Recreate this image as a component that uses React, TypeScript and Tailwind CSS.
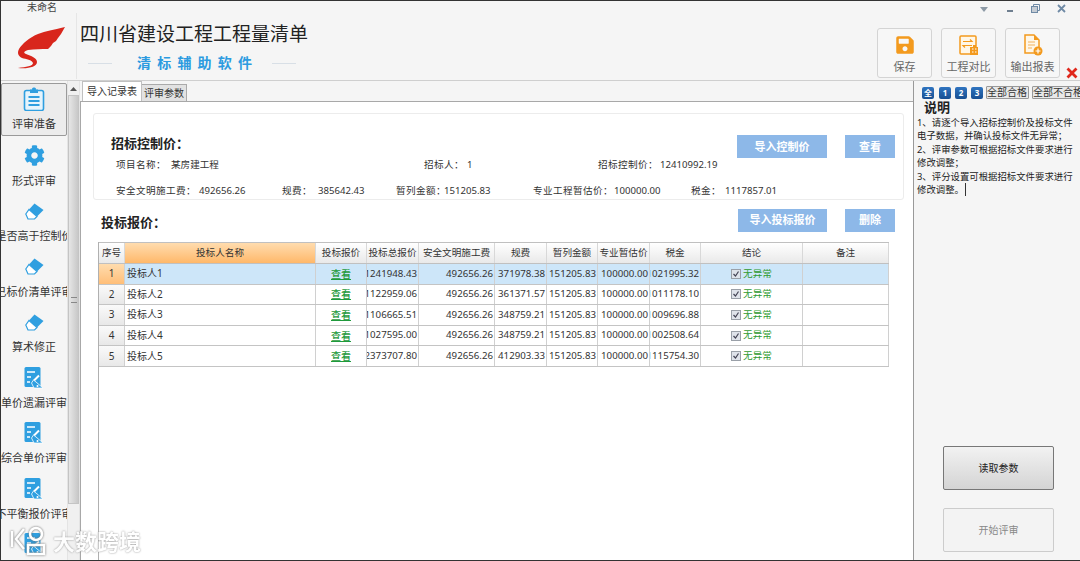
import { FaCog, FaSave } from 'react-icons/fa';

const bidders = [
  { name: '投标人1', total: '1241948.43', fee: '371978.38', tax: '1021995.32' },
  { name: '投标人2', total: '1122959.06', fee: '361371.57', tax: '1011178.10' },
  { name: '投标人3', total: '1106665.51', fee: '348759.21', tax: '1009696.88' },
  { name: '投标人4', total: '1027595.00', fee: '348759.21', tax: '1002508.64' },
  { name: '投标人5', total: '2373707.80', fee: '412903.33', tax: '1115754.30' },
];

const rowGrid =
  'grid w-[790px] grid-cols-[26px_191px_51px_52px_76px_52px_51px_52px_51px_102px_86px]';

function ClipboardIcon() {
  return (
    <svg width="22" height="24" viewBox="0 0 22 24" fill="none">
      <rect x="9" y="0.5" width="4" height="3" rx="1.5" fill="#2f9fe0" />
      <rect x="1.5" y="3.5" width="19" height="20" rx="2" stroke="#2f9fe0" strokeWidth="1.6" fill="#e6f4fc" />
      <path d="M5.5 10h11M5.5 14h11M5.5 18h11" stroke="#2f9fe0" strokeWidth="2" />
      <path d="M7 2.5h8v3.5H7z" fill="#2f9fe0" />
    </svg>
  );
}

function EraserIcon() {
  return (
    <svg width="19" height="17" viewBox="0 0 19 17" fill="none">
      <path d="M9.5 0.5 18.5 7 12 13.5 4 6.5z" fill="#2f9fe0" />
      <path d="M4 6.5 12 13.5 9.5 16H3L0.8 11z" fill="#fff" stroke="#2f9fe0" strokeWidth="1.2" />
    </svg>
  );
}

function ReviewIcon() {
  return (
    <svg width="20" height="22" viewBox="0 0 20 22" fill="none">
      <rect x="0.5" y="0" width="16" height="20" rx="1.5" fill="#2f9fe0" />
      <path d="M3 5h8M3 10h4M3 15h3" stroke="#fff" strokeWidth="1.5" />
      <path d="M15 8.5 10 13.5" stroke="#fff" strokeWidth="2" />
      <path d="M9.5 13 12 15 15.5 18 19 21H10L7.5 16z" fill="#2f9fe0" stroke="#fff" strokeWidth="0.8" />
      <circle cx="13.5" cy="19" r="1" fill="#fff" />
    </svg>
  );
}

function CompareIcon() {
  return (
    <svg width="20" height="21" viewBox="0 0 20 21" fill="none">
      <rect x="1" y="1" width="16" height="18" rx="1" fill="#fff7e8" stroke="#f39a1e" strokeWidth="1.5" />
      <path d="M4 6.5h9l-2-2M13 10.5H4l2 2" stroke="#f39a1e" strokeWidth="1.2" />
      <path d="M11 12h3v-2h3v2h2v8h-8z" fill="#f39a1e" />
      <path d="M13 14h1.5M16 14h1.5M13 17h1.5M16 17h1.5" stroke="#fff" />
    </svg>
  );
}

function ExportIcon() {
  return (
    <svg width="20" height="22" viewBox="0 0 20 22" fill="none">
      <path d="M2 1h9l5 5v13H2z" fill="#fff7e8" stroke="#f39a1e" strokeWidth="1.5" />
      <path d="M11 1v5h5z" fill="#f39a1e" />
      <path d="M5 8h7M5 11h7M5 14h4" stroke="#f3b45e" strokeWidth="1.2" />
      <circle cx="15" cy="17" r="4.5" fill="#f39a1e" />
      <path d="M12.5 17h5M15 14.5v5" stroke="#fff" strokeWidth="1.2" />
    </svg>
  );
}

function SideItem({ icon, label, active }: { icon: React.ReactNode; label: string; active?: boolean }) {
  return (
    <div
      className={`flex shrink-0 flex-col items-center overflow-hidden ${
        active
          ? 'mb-[2.5px] h-[53px] rounded-[2px] border border-[#9a9a9a] bg-[#ececec] pt-[2px]'
          : 'h-[55.5px] pt-[4px]'
      }`}
    >
      <div className="flex h-[26px] items-center justify-center">{icon}</div>
      <div className="mt-[4px] flex w-full justify-center whitespace-nowrap text-[11px] leading-[15px] text-[#333]">
        {label}
      </div>
    </div>
  );
}

function ToolButton({ icon, label }: { icon: React.ReactNode; label: string }) {
  return (
    <div className="flex h-[50px] w-[55px] flex-col items-center rounded-[3px] border border-[#d4d4d4] bg-[#f7f7f7] pt-[4px]">
      <div className="flex h-[24px] items-center">{icon}</div>
      <div className="mt-[3px] whitespace-nowrap text-[11px] leading-[14px] text-[#666]">{label}</div>
    </div>
  );
}

function BlueButton({ label, width }: { label: string; width: string }) {
  return (
    <div className={`flex h-[23px] items-center justify-center bg-[#8db8e8] text-[11px] font-bold text-white ${width}`}>
      {label}
    </div>
  );
}

function Badge({ label }: { label: string }) {
  return (
    <div className="flex h-[12px] w-[12px] shrink-0 items-center justify-center rounded-[2px] bg-gradient-to-b from-[#2f74c0] to-[#184f92] text-[8px] font-bold text-white">
      {label}
    </div>
  );
}

function GrayChip({ label, width }: { label: string; width: string }) {
  return (
    <div className={`flex h-[13px] shrink-0 items-center overflow-hidden whitespace-nowrap rounded-[1px] border border-[#999] bg-[#e8e8e8] text-[10px] text-[#333] ${width}`}>
      {label}
    </div>
  );
}

function Field({ label, value, box, labelBox }: { label: string; value: string; box: string; labelBox: string }) {
  return (
    <div className={`flex ${box}`}>
      <span className={`tracking-[0.4px] ${labelBox}`}>{label}</span>
      <span>{value}</span>
    </div>
  );
}

function HeadCell({ label, orange }: { label: string; orange?: boolean }) {
  return (
    <div
      className={`flex items-center justify-center overflow-hidden whitespace-nowrap border-r border-[#d8d8d8] text-[9.6px] text-[#333] ${
        orange ? 'bg-gradient-to-b from-[#ffdcae] to-[#ffb869]' : 'bg-gradient-to-b from-white to-[#e9e9e9]'
      }`}
    >
      {label}
    </div>
  );
}

function NumCell({ value }: { value: string }) {
  return (
    <div className="flex items-center justify-end overflow-hidden whitespace-nowrap border-r border-[#d0d0d0] pr-[1px] text-[9.7px] text-[#333]">
      {value}
    </div>
  );
}

export default function App() {
  return (
    <div className="flex h-[561px] w-[1080px] flex-col overflow-hidden border-y border-l border-[#333] bg-[#f5f5f5] font-['Noto_Sans','Noto_Sans_CJK_SC',sans-serif] text-[#333]">
      {/* header */}
      <div className="flex h-[80px] shrink-0 border-b border-[#cfcfcf]">
        <div className="flex-1">
          <div className="pl-[26px] text-[10px] leading-[12px] text-[#444]">未命名</div>
          <div className="flex">
            <div className="h-[66px] w-[76px] shrink-0 border-r border-[#e6e6e6] pl-[7px] pt-[9px]">
              <svg width="64" height="50" viewBox="0 0 64 50">
                <path
                  d="M57 5C45 8 38 9 30 12 22 15 14 22 11 27 9 31 10 34 14 36 18 37 24 38 25 41 25 44 18 45 10 46 20 47 29 45 29 40 29 36 23 34 18 32 15 31 16 29 20 28 27 27 33 27 40 27L43 24 45 21 48 19 50 16 53 12Z"
                  fill="#d8261c"
                />
              </svg>
            </div>
            <div className="pl-[3px] pt-[8px]">
              <div className="whitespace-nowrap text-[19px] leading-[26px] text-[#222]">四川省建设工程工程量清单</div>
              <div className="mt-[6px] flex items-center">
                <div className="ml-[8px] h-px w-[24px] bg-[#d8dfe6]" />
                <div className="ml-[25px] whitespace-nowrap text-[14px] font-bold leading-[20px] tracking-[6.2px] text-[#2c9be0]">
                  清标辅助软件
                </div>
                <div className="ml-[14px] h-px w-[24px] bg-[#d8dfe6]" />
              </div>
            </div>
          </div>
        </div>
        <div className="flex w-[203px] shrink-0 flex-col">
          <div className="flex h-[27px] items-start pt-[1px] text-[#6f8aa5]">
            <svg className="ml-[102px] mt-[5px]" width="10" height="6" viewBox="0 0 10 6">
              <path d="M1 0h8L5 5z" fill="#8d9aa6" />
            </svg>
            <div className="ml-[18px] mt-[8px] h-[2px] w-[6px] bg-[#6f7f90]" />
            <svg className="ml-[18px] mt-[2px]" width="9" height="9" viewBox="0 0 9 9" fill="none">
              <rect x="0.5" y="2.5" width="6" height="6" fill="#c5ccd4" stroke="#6f8aa5" />
              <path d="M2.5 2V.5h6v6H7" stroke="#6f8aa5" />
            </svg>
            <svg className="ml-[17px] mt-[2px]" width="9" height="9" viewBox="0 0 9 9">
              <path d="M1 1l7 7M8 1L1 8" stroke="#6f8aa5" strokeWidth="1.8" />
            </svg>
          </div>
          <div className="flex items-start">
            <ToolButton icon={<FaSave size={20} color="#f39a1e" />} label="保存" />
            <div className="ml-[9px]">
              <ToolButton icon={<CompareIcon />} label="工程对比" />
            </div>
            <div className="ml-[9px]">
              <ToolButton icon={<ExportIcon />} label="输出报表" />
            </div>
            <svg className="ml-[6px] mt-[39px]" width="12" height="12" viewBox="0 0 12 12">
              <path d="M1.5 1.5l9 9M10.5 1.5l-9 9" stroke="#e0281c" strokeWidth="2.8" />
            </svg>
          </div>
        </div>
      </div>

      <div className="flex min-h-0 flex-1">
        {/* sidebar */}
        <div className="flex w-[66px] shrink-0 flex-col overflow-hidden pt-[2px]">
          <SideItem active icon={<ClipboardIcon />} label="评审准备" />
          <SideItem icon={<FaCog size={21} color="#2f9fe0" />} label="形式评审" />
          <SideItem icon={<EraserIcon />} label="是否高于控制价" />
          <SideItem icon={<EraserIcon />} label="已标价清单评审" />
          <SideItem icon={<EraserIcon />} label="算术修正" />
          <SideItem icon={<ReviewIcon />} label="单价遗漏评审" />
          <SideItem icon={<ReviewIcon />} label="综合单价评审" />
          <SideItem icon={<ReviewIcon />} label="不平衡报价评审" />
          <SideItem icon={<ReviewIcon />} label="清单子目评审" />
        </div>

        {/* scrollbar */}
        <div className="flex w-[13px] shrink-0 flex-col items-center border-x border-[#e4e4e4] bg-[#f0f0f0]">
          <svg className="mt-[6px]" width="7" height="4" viewBox="0 0 7 4">
            <path d="M3.5 0 7 4H0z" fill="#555" />
          </svg>
          <div className="mt-[4px] flex h-[409px] w-full flex-col items-center justify-center border border-[#c4c4c4] bg-gradient-to-r from-[#e6e6e6] to-[#c8c8c8]">
            <div className="h-[6px] w-[6px] border-y border-[#888]" />
          </div>
        </div>

        {/* main */}
        <div className="flex min-w-0 flex-1 flex-col">
          <div className="flex h-[20px] shrink-0 items-end pl-[2px]">
            <div className="flex h-[20px] w-[60px] items-center justify-center border border-b-0 border-[#c0c0c0] bg-white text-[10px]">
              导入记录表
            </div>
            <div className="flex h-[17px] w-[45px] items-center justify-center border-r border-t border-[#aaa] bg-[#e2e2e2] text-[10px]">
              评审参数
            </div>
          </div>
          <div className="min-h-0 flex-1 border-l border-t border-[#a8a8a8] bg-white pl-[12px] pr-[9px] pt-[11px]">
            <div className="h-[87px] rounded-[3px] border border-[#ececec] pl-[17px] pt-[21px] text-[9.6px] leading-[14px]">
              <div className="flex h-[23px] items-start">
                <div className="-mt-px flex-1 text-[13px] font-bold leading-[18px] text-[#222]">招标控制价：</div>
                <BlueButton label="导入控制价" width="w-[90px]" />
                <div className="ml-[18px] mr-[8px]">
                  <BlueButton label="查看" width="w-[50px]" />
                </div>
              </div>
              <div className="flex whitespace-nowrap pl-[5px]">
                <Field label="项目名称：" value="某房建工程" box="w-[308px]" labelBox="w-[55px]" />
                <Field label="招标人：" value="1" box="w-[174px]" labelBox="w-[43px]" />
                <Field label="招标控制价：" value="12410992.19" box="" labelBox="w-[62px]" />
              </div>
              <div className="mt-[12px] flex whitespace-nowrap pl-[5px]">
                <Field label="安全文明施工费：" value="492656.26" box="w-[166px]" labelBox="w-[83px]" />
                <Field label="规费：" value="385642.43" box="w-[114px]" labelBox="w-[36px]" />
                <Field label="暂列金额：" value="151205.83" box="w-[137px]" labelBox="w-[48px]" />
                <Field label="专业工程暂估价：" value="100000.00" box="w-[158px]" labelBox="w-[81px]" />
                <Field label="税金：" value="1117857.01" box="" labelBox="w-[34px]" />
              </div>
            </div>

            <div className="mt-[9px] flex h-[24px] items-start pl-[8px]">
              <div className="flex-1 text-[13px] font-bold leading-[26px] text-[#222]">投标报价：</div>
              <BlueButton label="导入投标报价" width="w-[89px]" />
              <div className="ml-[18px] mr-[9px]">
                <BlueButton label="删除" width="w-[50px]" />
              </div>
            </div>

            <div className="ml-[5px] mt-[9px] h-[400px] border-l border-[#b0b0b0]">
              <div className={`${rowGrid} h-[22px] border-y border-[#c0c0c0]`}>
                <HeadCell label="序号" />
                <HeadCell label="投标人名称" orange />
                <HeadCell label="投标报价" />
                <HeadCell label="投标总报价" />
                <HeadCell label="安全文明施工费" />
                <HeadCell label="规费" />
                <HeadCell label="暂列金额" />
                <HeadCell label="专业暂估价" />
                <HeadCell label="税金" />
                <HeadCell label="结论" />
                <HeadCell label="备注" />
              </div>
              {bidders.map((b, i) => (
                <div
                  key={b.name}
                  className={`${rowGrid} h-[20.6px] border-b border-[#c4c4c4] ${i === 0 ? 'bg-[#cde6f9]' : 'bg-white'}`}
                >
                  <div
                    className={`flex items-center justify-center border-r border-[#d0d0d0] text-[10px] ${
                      i === 0
                        ? 'bg-gradient-to-b from-[#ffdcae] to-[#ffbe78]'
                        : 'bg-gradient-to-b from-[#fafafa] to-[#e8e8e8]'
                    }`}
                  >
                    {i + 1}
                  </div>
                  <div className="flex items-center border-r border-[#d0d0d0] pl-[2px] text-[10px]">{b.name}</div>
                  <div className="flex items-center justify-center border-r border-[#d0d0d0] pt-[1px] text-[10px] font-medium text-[#1f9a3c] underline">
                    查看
                  </div>
                  <NumCell value={b.total} />
                  <NumCell value="492656.26" />
                  <NumCell value={b.fee} />
                  <NumCell value="151205.83" />
                  <NumCell value="100000.00" />
                  <NumCell value={b.tax} />
                  <div className="flex items-center justify-center border-r border-[#d0d0d0] text-[9.6px] text-[#2f9a2f]">
                    <svg className="mr-[2px]" width="10" height="10" viewBox="0 0 10 10">
                      <rect x="0.5" y="0.5" width="9" height="9" fill="#dfe3ea" stroke="#9aa0a8" />
                      <path d="M2.5 5l2 2 3-4.5" fill="none" stroke="#445" strokeWidth="1.2" />
                    </svg>
                    无异常
                  </div>
                  <div className="border-r border-[#d0d0d0]" />
                </div>
              ))}
            </div>
          </div>
        </div>

        {/* right panel */}
        <div className="flex w-[167px] shrink-0 flex-col overflow-hidden border-l border-[#999] bg-[#f5f5f5]">
          <div className="flex items-center pl-[8px] pt-[5px]">
            <Badge label="全" />
            <div className="ml-[5px]">
              <Badge label="1" />
            </div>
            <div className="ml-[4px]">
              <Badge label="2" />
            </div>
            <div className="ml-[4px]">
              <Badge label="3" />
            </div>
            <div className="ml-[3px]">
              <GrayChip label="全部合格" width="w-[43px]" />
            </div>
            <div className="ml-[3px]">
              <GrayChip label="全部不合格" width="w-[52px]" />
            </div>
          </div>
          <div className="pl-[10px] text-[13px] font-bold leading-[17px] text-[#222]">说明</div>
          <div className="whitespace-nowrap pl-[3px] text-[9.4px] leading-[13.4px] tracking-[0.01px] text-[#222]">
            <div>1、请逐个导入招标控制价及投标文件</div>
            <div>电子数据，并确认投标文件无异常；</div>
            <div>2、评审参数可根据招标文件要求进行</div>
            <div>修改调整；</div>
            <div>3、评分设置可根据招标文件要求进行</div>
            <div className="flex items-center">
              修改调整。
              <span className="ml-[1px] h-[13px] w-px bg-[#333]" />
            </div>
          </div>
          <div className="mt-[250px] pl-[29px]">
            <div className="flex h-[44px] w-[111px] items-center justify-center rounded-[2px] border border-[#777] bg-gradient-to-b from-[#f2f2f2] to-[#d4d4d4] text-[10px] text-[#222]">
              读取参数
            </div>
            <div className="mt-[18px] flex h-[44px] w-[111px] items-center justify-center rounded-[2px] border border-[#ccc] bg-[#f3f3f3] text-[10px] text-[#888]">
              开始评审
            </div>
          </div>
        </div>
      </div>

      {/* watermark over the page */}
      <div className="absolute left-[10px] top-[525px] flex items-center">
        <svg
          className="[filter:drop-shadow(0_0_1px_#666)]"
          width="40"
          height="31"
          viewBox="0 0 40 31"
          fill="none"
          stroke="#fff"
          strokeWidth="2.5"
        >
          <path d="M2 6v16M14 4 6 14l8 10" />
          <circle cx="26" cy="9" r="6" />
          <path d="M18 20h16v9H18z" />
        </svg>
        <div className="ml-[3px] whitespace-nowrap text-[22px] font-bold leading-[28px] text-white opacity-85 [text-shadow:0_0_2px_#777]">
          大数跨境
        </div>
      </div>
    </div>
  );
}
